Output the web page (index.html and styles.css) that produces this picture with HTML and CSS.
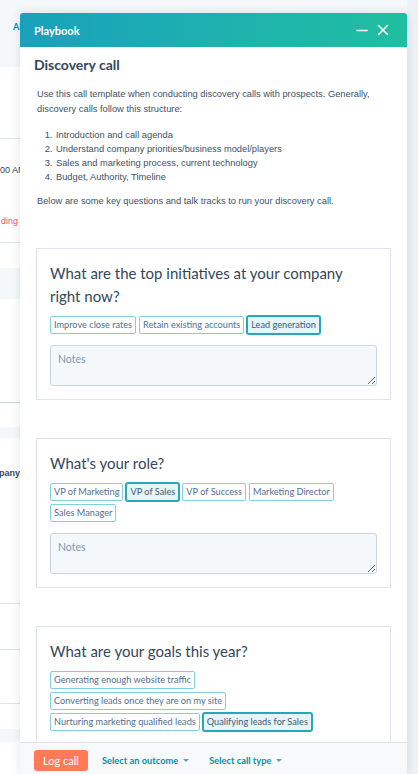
FILE: index.html
```html
<!DOCTYPE html>
<html>
<head>
<meta charset="utf-8">
<title>Playbook</title>
<link rel="stylesheet" href="styles.css">
</head>
<body>
<div class="page">
  <div class="bg-main">
    <div class="bg-head"><span class="bg-tab">Al</span></div>
    <div class="bg-sec bg-h72 bg-line"></div>
    <div class="bg-sec bg-time bg-line">
      <span class="bg-txt">00 AM</span>
      <span class="bg-txt bg-red">ding</span>
    </div>
    <div class="bg-sec bg-h25"></div>
    <div class="bg-sec bg-band bg-h31"></div>
    <div class="bg-sec bg-h104 bg-line-blue"></div>
    <div class="bg-sec bg-h24"></div>
    <div class="bg-sec bg-band bg-h11"></div>
    <div class="bg-sec bg-company bg-line"><span class="bg-txt bg-bold">pany</span></div>
    <div class="bg-sec bg-h46 bg-line"></div>
    <div class="bg-sec bg-h54 bg-line"></div>
    <div class="bg-sec bg-h25"></div>
    <div class="bg-sec bg-band bg-h13"></div>
    <div class="bg-fill"></div>
  </div>
  <div class="bg-side"></div>
</div>

<div class="panel">
  <div class="panel-head">
    <span class="panel-title">Playbook</span>
    <div class="head-icons">
      <svg class="ico" width="12" height="12" viewBox="0 0 12 12"><path d="M1 6.5h10" stroke="#fff" stroke-width="1.6" stroke-linecap="round"/></svg>
      <svg class="ico" width="12" height="12" viewBox="0 0 12 12"><path d="M1.5 1.5l9 9M10.5 1.5l-9 9" stroke="#fff" stroke-width="1.6" stroke-linecap="round"/></svg>
    </div>
  </div>

  <div class="panel-body">
    <h1 class="title">Discovery call</h1>
    <div class="desc">
      <p>Use this call template when conducting discovery calls with prospects. Generally, discovery calls follow this structure:</p>
      <ol class="steps">
        <li>Introduction and call agenda</li>
        <li>Understand company priorities/business model/players</li>
        <li>Sales and marketing process, current technology</li>
        <li>Budget, Authority, Timeline</li>
      </ol>
      <p class="below">Below are some key questions and talk tracks to run your discovery call.</p>
    </div>

    <section class="card">
      <h2 class="q">What are the top initiatives at your company right now?</h2>
      <div class="chips">
        <div class="chip-row">
          <span class="chip">Improve close rates</span>
          <span class="chip">Retain existing accounts</span>
          <span class="chip on">Lead generation</span>
        </div>
      </div>
      <textarea class="notes" placeholder="Notes"></textarea>
    </section>

    <section class="card">
      <h2 class="q">What's your role?</h2>
      <div class="chips">
        <div class="chip-row">
          <span class="chip">VP of Marketing</span>
          <span class="chip on">VP of Sales</span>
          <span class="chip">VP of Success</span>
          <span class="chip">Marketing Director</span>
        </div>
        <div class="chip-row">
          <span class="chip">Sales Manager</span>
        </div>
      </div>
      <textarea class="notes" placeholder="Notes"></textarea>
    </section>

    <section class="card">
      <h2 class="q">What are your goals this year?</h2>
      <div class="chips">
        <div class="chip-row"><span class="chip">Generating enough website traffic</span></div>
        <div class="chip-row"><span class="chip">Converting leads once they are on my site</span></div>
        <div class="chip-row">
          <span class="chip">Nurturing marketing qualified leads</span>
          <span class="chip on">Qualifying leads for Sales</span>
        </div>
      </div>
      <textarea class="notes" placeholder="Notes"></textarea>
    </section>
  </div>

  <div class="panel-foot">
    <button class="btn">Log call</button>
    <span class="link">Select an outcome<span class="caret"></span></span>
    <span class="link">Select call type<span class="caret"></span></span>
  </div>
</div>
</body>
</html>
```

FILE: styles.css
```css
* { box-sizing: border-box; margin: 0; padding: 0; }

html, body { width: 418px; height: 774px; overflow: hidden; }

body {
  position: relative;
  font-family: "Liberation Sans", Arial, sans-serif;
  background: #f5f8fa;
  color: #33475b;
}

/* ---------- background page ---------- */
.page { display: flex; height: 774px; }
.bg-main { flex: 1; display: flex; flex-direction: column; background: #fff; }
.bg-side { width: 11px; background: #eef1f5; }

.bg-head {
  height: 67px;
  background: #f5f8fa;
  padding: 16px 0 0 13px;
}
.bg-tab {
  font-family: Lato, sans-serif;
  font-weight: 700;
  font-size: 9px;
  line-height: 12px;
  color: #0091ae;
}
.bg-sec { flex: none; }
.bg-line { border-bottom: 1px solid #dfe3eb; }
.bg-line-blue { border-bottom: 1px solid #cbd6e2; }
.bg-band { background: #f5f8fa; }
.bg-h72 { height: 72px; }
.bg-h25 { height: 25px; }
.bg-h31 { height: 31px; }
.bg-h104 { height: 104px; }
.bg-h24 { height: 24px; }
.bg-h11 { height: 11px; }
.bg-h46 { height: 46px; }
.bg-h54 { height: 54px; }
.bg-h13 { height: 13px; }
.bg-fill { flex: 1; }

.bg-time {
  height: 104px;
  display: flex;
  flex-direction: column;
  padding-top: 25px;
  gap: 39px;
}
.bg-company { height: 166px; padding-top: 29px; }
.bg-txt {
  display: block;
  font-size: 9px;
  line-height: 12px;
  color: #33475b;
  white-space: nowrap;
}
.bg-red { color: #f2545b; padding-left: 1px; }
.bg-bold { font-weight: 700; margin-left: -1px; }

/* ---------- panel ---------- */
.panel {
  position: absolute;
  left: 20px;
  top: 13px;
  width: 387px;
  bottom: 0;
  display: flex;
  flex-direction: column;
  background: #fff;
  border-radius: 3px 3px 0 0;
  box-shadow: 0 0 10px rgba(45, 62, 80, 0.14);
}

.panel-head {
  flex: none;
  height: 34px;
  display: flex;
  align-items: center;
  justify-content: space-between;
  padding: 0 18px 0 14px;
  background: linear-gradient(90deg, #19a1bc 0%, #1eb4ad 60%, #20bea0 100%);
  border-radius: 3px 3px 0 0;
}
.panel-title {
  font-family: Lato, sans-serif;
  font-weight: 700;
  font-size: 11px;
  color: #fff;
}
.head-icons { display: flex; align-items: center; gap: 9px; }
.ico { display: block; }

.panel-body {
  flex: 1;
  overflow: hidden;
  padding: 9px 14px 0;
}

.title {
  font-family: Lato, sans-serif;
  font-weight: 700;
  font-size: 14px;
  line-height: 18px;
  color: #33475b;
}

.desc {
  margin-top: 13px;
  padding: 0 3px;
  font-size: 9.3px;
  line-height: 15px;
  color: #3d5166;
}
.steps {
  margin-top: 11px;
  padding-left: 18px;
  line-height: 14px;
}
.steps li { padding-left: 1px; }
.below { margin-top: 10px; }

/* ---------- question cards ---------- */
.card {
  margin: 38px 2px 0;
  border: 1px solid #dfe3eb;
  padding: 13px 13px;
  background: #fff;
}
.desc + .card { margin-top: 39px; }
.q {
  font-family: Lato, sans-serif;
  font-weight: 400;
  font-size: 15px;
  line-height: 23px;
  color: #33475b;
  padding-right: 20px;
  margin-bottom: 8px;
}
.chips { display: flex; flex-direction: column; gap: 3px; }
.chip-row { display: flex; gap: 3px; }
.chip {
  height: 18px;
  padding: 0 3px;
  border: 1px solid #7fd1de;
  border-radius: 2px;
  background: #fff;
  font-family: Lato, sans-serif;
  font-size: 9.2px;
  line-height: 16px;
  color: #516f90;
  white-space: nowrap;
}
.chip.on {
  border-color: #29a6bb;
  box-shadow: 0 0 0 1px #29a6bb;
  background: #e5f5f8;
  color: #425b76;
}

.notes {
  display: block;
  width: 100%;
  height: 41px;
  margin-top: 11px;
  padding: 6px 7px;
  background: #f5f8fa;
  border: 1px solid #cbd6e2;
  border-radius: 3px;
  font-family: Lato, sans-serif;
  font-size: 10.5px;
  line-height: 14px;
  color: #33475b;
  outline: none;
}
.notes::placeholder { color: #7c98b6; }

/* ---------- footer ---------- */
.panel-foot {
  flex: none;
  height: 32px;
  display: flex;
  align-items: flex-start;
  padding: 7px 14px 0;
  background: #f7f9fa;
  border-top: 1px solid #dfe3eb;
}
.btn {
  width: 54px;
  height: 21px;
  border: none;
  border-radius: 3px;
  background: #ff7a59;
  color: #fff;
  font-family: Lato, sans-serif;
  font-size: 11px;
}
.link {
  display: flex;
  align-items: center;
  height: 21px;
  margin-left: 14px;
  font-family: Lato, sans-serif;
  font-weight: 700;
  font-size: 9.3px;
  color: #0091ae;
}
.link + .link { margin-left: 20px; }
.caret {
  width: 0;
  height: 0;
  margin-left: 5px;
  border-left: 3px solid transparent;
  border-right: 3px solid transparent;
  border-top: 3px solid #7c98b6;
}
```
